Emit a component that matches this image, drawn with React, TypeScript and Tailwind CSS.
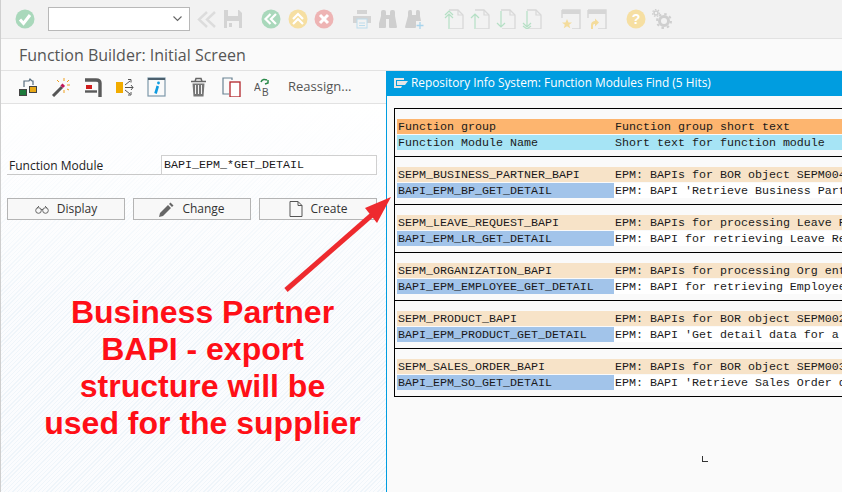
import { ReactNode } from 'react';

const groups = [
  { group: 'SEPM_BUSINESS_PARTNER_BAPI', groupText: 'EPM: BAPIs for BOR object SEPM004', name: 'BAPI_EPM_BP_GET_DETAIL', text: "EPM: BAPI 'Retrieve Business Part" },
  { group: 'SEPM_LEAVE_REQUEST_BAPI', groupText: 'EPM: BAPIs for processing Leave R', name: 'BAPI_EPM_LR_GET_DETAIL', text: 'EPM: BAPI for retrieving Leave Re' },
  { group: 'SEPM_ORGANIZATION_BAPI', groupText: 'EPM: BAPIs for processing Org ent', name: 'BAPI_EPM_EMPLOYEE_GET_DETAIL', text: 'EPM: BAPI for retrieving Employee' },
  { group: 'SEPM_PRODUCT_BAPI', groupText: 'EPM: BAPIs for BOR object SEPM002', name: 'BAPI_EPM_PRODUCT_GET_DETAIL', text: "EPM: BAPI 'Get detail data for a" },
  { group: 'SEPM_SALES_ORDER_BAPI', groupText: 'EPM: BAPIs for BOR object SEPM003', name: 'BAPI_EPM_SO_GET_DETAIL', text: "EPM: BAPI 'Retrieve Sales Order d" },
];

function Icon({ w = 20, h = 20, className = '', children }: { w?: number; h?: number; className?: string; children: ReactNode }) {
  return (
    <svg width={w} height={h} viewBox={`0 0 ${w} ${h}`} className={`shrink-0 ${className}`} fill="none">
      {children}
    </svg>
  );
}

function Page({ arrow }: { arrow: 'up2' | 'up' | 'down' | 'down2' }) {
  const color = '#b5e0c5';
  return (
    <Icon>
      <path d="M5 1h9l5 5v14H6" stroke="#d8d8d8" strokeWidth="1.3" />
      <path d="M14 1v5h5" stroke="#d8d8d8" strokeWidth="1.2" />
      {arrow.startsWith('up') ? (
        <path d="M5 20V5M1 9l4-4 4 4" stroke={color} strokeWidth="1.2" />
      ) : (
        <path d="M5 2v16M1 14l4 4 4-4" stroke={color} strokeWidth="1.2" />
      )}
      {arrow === 'up2' && <path d="M1 6l4-4 4 4" stroke={color} strokeWidth="1.2" />}
      {arrow === 'down2' && <path d="M1 17l4 3 4-3" stroke={color} strokeWidth="1.2" />}
    </Icon>
  );
}

function WindowFrame() {
  return (
    <>
      <path d="M1 1h18v19h-8M1 1v8" stroke="#d6d6d6" strokeWidth="1.4" />
      <rect x="1" y="1" width="18" height="4" fill="#d6d6d6" />
    </>
  );
}

function TopToolbar() {
  return (
    <div className="flex h-[39px] items-center border-b border-[#e2e2e2] bg-[#f2f2f2] pl-[14px]">
      <Icon>
        <circle cx="10" cy="10" r="9.5" fill="#a9d8bb" />
        <path d="M5 10.500l3.500 4L15 6" stroke="#fff" strokeWidth="3" />
      </Icon>
      <div className="ml-[13px] flex h-[24px] w-[142px] items-center justify-end border border-[#b8b8b8] bg-white pr-[7px]">
        <svg width="9" height="6" viewBox="0 0 9 6" fill="none"><path d="M.5.5l4 4 4-4" stroke="#666" strokeWidth="1.1" /></svg>
      </div>
      <Icon className="ml-[7px]">
        <path d="M10 3L2 10.500l8 7.500M18 3l-8 7.500 8 7.500" stroke="#dcdcdc" strokeWidth="2.400" />
      </Icon>
      <Icon className="ml-[6px]">
        <path d="M1 1h15l3 3v15H1z" fill="#d4d4d4" />
        <rect x="5" y="1" width="10" height="6" fill="#f2f2f2" />
        <rect x="4" y="12" width="12" height="7" fill="#f2f2f2" />
        <rect x="6" y="14" width="3" height="4" fill="#d4d4d4" />
      </Icon>
      <Icon className="ml-[18px]">
        <circle cx="10" cy="10" r="9.5" fill="#a9d8bb" />
        <path d="M9.500 5l-5 5 5 5M15 5l-5 5 5 5" stroke="#fff" strokeWidth="2.200" />
      </Icon>
      <Icon className="ml-[7px]">
        <circle cx="10" cy="10" r="9.5" fill="#f6dfa2" />
        <path d="M5 10l5-5 5 5M5 15l5-5 5 5" stroke="#fff" strokeWidth="2.200" />
      </Icon>
      <Icon className="ml-[6px]">
        <circle cx="10" cy="10" r="9.5" fill="#eeb4b4" />
        <path d="M6 6l8 8M14 6l-8 8" stroke="#fff" strokeWidth="3" />
      </Icon>
      <Icon className="ml-[18px]">
        <path d="M5 1h10v4H5zM1 7h18v7H1z" fill="#d4d4d4" />
        <rect x="5" y="10" width="10" height="9" fill="#f2f2f2" stroke="#bcdcec" />
        <path d="M7 14h6M7 16.500h6" stroke="#bcdcec" />
      </Icon>
      <Icon className="ml-[7px]" w={18}>
        <path d="M2 3q0-2 2-2h1q2 0 2 2v3h4V3q0-2 2-2h1q2 0 2 2v4l2 11q0 1-1 1h-6q-1 0-1-1V10H7v8q0 1-1 1H0q-1 0-1-1L2 7z" fill="#cfcfcf" />
      </Icon>
      <Icon className="ml-[8px]">
        <path d="M3 3q0-2 2-2h1q1 0 1 2v3h4V3q0-2 1-2h1q2 0 2 2v4l1 5h-5v6q0 1-1 1H1q-1 0-1-1L3 7z" fill="#cfcfcf" />
        <path d="M15 13v7M11.500 16.500h7" stroke="#a9d4ec" strokeWidth="1.300" />
      </Icon>
      <div className="ml-[19px] flex gap-[6px]">
        <Page arrow="up2" />
        <Page arrow="up" />
        <Page arrow="down" />
        <Page arrow="down2" />
      </div>
      <Icon className="ml-[19px]">
        <WindowFrame />
        <path d="M6 10l1.500 3.500H11l-2.800 2.200 1 3.500L6 17.200 2.800 19.200l1-3.500L1 13.500h3.500z" fill="#f4dc9c" />
      </Icon>
      <Icon className="ml-[6px]">
        <WindowFrame />
        <path d="M4 20v-4c0-3 2-4 4-4V9.500l4 4-4 4V15c-1.500 0-2 .500-2 2v3z" fill="#f4dc9c" />
      </Icon>
      <Icon className="ml-[19px]">
        <circle cx="10" cy="10" r="9.5" fill="#f6dfa2" />
        <text x="10" y="15" textAnchor="middle" fill="#fff" className="font-['Liberation_Sans'] text-[14px] font-bold">?</text>
      </Icon>
      <Icon className="ml-[6px]">
        <circle cx="12" cy="12" r="4.500" stroke="#cfcfcf" strokeWidth="3" />
        <circle cx="12" cy="12" r="7" stroke="#cfcfcf" strokeWidth="2" strokeDasharray="2.500 3" />
        <circle cx="4" cy="4" r="2" stroke="#cfcfcf" strokeWidth="1.500" />
        <circle cx="4" cy="4" r="3.500" stroke="#cfcfcf" strokeWidth="1.200" strokeDasharray="1.500 1.500" />
      </Icon>
    </div>
  );
}

function AppToolbar() {
  return (
    <div className="flex h-[33px] items-center border-b border-[#e2e2e2] pl-[17px]">
      <Icon>
        <path d="M6 10V4h5l1-2 2 2h1v4" stroke="#5a6f80" strokeWidth="1.200" />
        <rect x="1.500" y="12.500" width="7" height="6" fill="#1d7a3c" stroke="#444" />
        <rect x="11.500" y="9.500" width="7" height="6" fill="#e9a916" stroke="#444" />
      </Icon>
      <Icon className="ml-[13px]">
        <path d="M2 19L11 10" stroke="#555" strokeWidth="3" />
        <path d="M10.500 7.500l2.500 2.500" stroke="#c2185b" strokeWidth="3" />
        <path d="M13 1v3M13 13v3M19 8h-3M6 3l2 2M18 3l-2 2M18 13l-2-1" stroke="#f0a01e" strokeWidth="1" />
      </Icon>
      <Icon className="ml-[13px]">
        <path d="M1 3h11q4 0 4 3v14" stroke="#5a5a5a" strokeWidth="3.400" />
        <rect x="2" y="8" width="6" height="4" fill="#d01c1c" />
        <path d="M1 14.500h12" stroke="#5a5a5a" strokeWidth="2.400" />
      </Icon>
      <Icon className="ml-[12px]">
        <rect x="0" y="5" width="7" height="11" fill="#f2ac00" />
        <path d="M9 8l5-4M9 10.500h8M9 13l5 4M12 2.500h3v3M15 8l2 2.500-2 2.500M12 18h3v-3" stroke="#555" strokeWidth="1" />
      </Icon>
      <Icon className="ml-[11px]">
        <rect x="1" y="1" width="17" height="18" stroke="#7d98aa" strokeWidth="1.200" />
        <rect x="1" y="1" width="17" height="2" fill="#4b5f6d" />
        <circle cx="11.500" cy="6" r="1.400" fill="#0f9be0" />
        <path d="M10.800 9L8.500 16.500" stroke="#0f9be0" strokeWidth="2.600" />
      </Icon>
      <Icon className="ml-[23px]">
        <path d="M1 4.500h15M5 4.500l1-3h5l1 3" stroke="#666" strokeWidth="1.500" />
        <path d="M2.500 6.500h12l-1 13h-10z" fill="#777" />
        <path d="M5.500 8v9M8.500 8v9M11.500 8v9" stroke="#f4f4f4" />
      </Icon>
      <Icon className="ml-[12px]">
        <path d="M10 3V1H1v16h6" stroke="#6b8393" strokeWidth="1.200" />
        <rect x="8" y="5" width="10" height="15" fill="#fff" stroke="#b3262c" strokeWidth="1.300" />
      </Icon>
      <Icon className="ml-[12px]">
        <text x="0" y="14" fill="#555" className="font-['Liberation_Sans'] text-[10px]">A</text>
        <text x="8" y="19" fill="#555" className="font-['Liberation_Sans'] text-[10px]">B</text>
        <path d="M7 5c1-3 4-3 6-2M11 7l3-1 0-3" stroke="#2b8a4a" strokeWidth="1.500" />
      </Icon>
      <span className="ml-[14px] font-['Open_Sans'] text-[13px] text-[#555]">Reassign...</span>
    </div>
  );
}

function SapButton({ icon, label }: { icon: ReactNode; label: string }) {
  return (
    <button className="flex h-[22px] w-[118px] items-center justify-center gap-[8px] border border-[#b4b4b4] bg-[#f8f8f8] font-['Open_Sans'] text-[12px] text-[#333]">
      {icon}
      {label}
    </button>
  );
}

function LeftForm() {
  return (
    <div className="relative flex-1 bg-[linear-gradient(to_bottom,#ffffff_0%,rgba(255,255,255,0)_55%),repeating-linear-gradient(135deg,#eff5fa_0px,#eff5fa_1px,#fbfcfe_1px,#fbfcfe_3px)]">
      <div className="pl-[6px] pr-[9px] pt-[51px]">
        <div className="flex h-[20px] items-center border-b border-[#c8c8c8]">
          <span className="w-[154px] pl-[2px] pt-[2px] font-['Open_Sans'] text-[12px] text-[#222]">Function Module</span>
          <div className="flex h-[20px] flex-1 items-center border border-[#d0d0d0] bg-white pl-[2px] pt-[3px] font-['Liberation_Mono'] text-[11.67px] text-[#1a1a1a]">
            BAPI_EPM_*GET_DETAIL
          </div>
        </div>
        <div className="mt-[23px] flex gap-[8px]">
          <SapButton
            label="Display"
            icon={
              <svg width="14" height="9" viewBox="0 0 14 9" fill="none" stroke="#666">
                <circle cx="3.500" cy="5.500" r="2.800" />
                <circle cx="10.500" cy="5.500" r="2.800" />
                <path d="M6 4.500h2M2 3l2-2M12 3l-2-2" />
              </svg>
            }
          />
          <SapButton
            label="Change"
            icon={
              <svg width="15" height="15" viewBox="0 0 15 15" fill="#666">
                <path d="M0 15l1-4 8-8 3 3-8 8zM10 2l1.500-1.500 3 3L13 5z" />
              </svg>
            }
          />
          <SapButton
            label="Create"
            icon={
              <svg width="14" height="16" viewBox="0 0 14 16" fill="none" stroke="#555">
                <path d="M1 .5h8l4 4v11H1zM9 .5v4h4" />
              </svg>
            }
          />
        </div>
      </div>
      <p className="mt-[74px] pl-[18px] text-center font-['Liberation_Sans'] text-[32px] font-bold leading-[37px] text-[#ff0f17]">
        Business Partner
        <br />
        BAPI - export
        <br />
        structure will be
        <br />
        used for the supplier
      </p>
    </div>
  );
}

function ResultTable() {
  return (
    <div className="ml-[7px] mt-[12px] w-[600px] border border-black font-['Liberation_Mono'] text-[11.67px] leading-[17px] text-[#1a1a1a]">
      <div className="border-b border-black px-[2px] pb-[6px] pt-[10px]">
        <div className="flex h-[15px] bg-[#fdb56f]">
          <span className="w-[217px] pl-[1px]">Function group</span>
          <span className="pl-[1px]">Function group short text</span>
        </div>
        <div className="mt-[1px] flex h-[15px] bg-[#a6e4f5]">
          <span className="w-[217px] pl-[1px]">Function Module Name</span>
          <span className="pl-[1px]">Short text for function module</span>
        </div>
      </div>
      {groups.map((g, i) => (
        <div key={g.name} className={`px-[2px] pb-[6px] pt-[10px] ${i < groups.length - 1 ? 'border-b border-black' : ''}`}>
          <div className="flex h-[15px] bg-[#f7e3c8]">
            <span className="w-[217px] pl-[1px]">{g.group}</span>
            <span className="whitespace-nowrap pl-[1px]">{g.groupText}</span>
          </div>
          <div className="mt-[1px] flex h-[15px] bg-white">
            <span className="h-[15px] w-[217px] bg-[#a2c4ea] pl-[1px]">{g.name}</span>
            <span className="whitespace-nowrap pl-[1px]">{g.text}</span>
          </div>
        </div>
      ))}
    </div>
  );
}

export default function App() {
  return (
    <div className="relative flex h-[492px] w-[842px] flex-col overflow-hidden border-l border-[#cfcfcf] bg-[#fafafa] font-['Liberation_Sans',sans-serif]">
      <TopToolbar />
      <div className="flex h-[31px] items-center pl-[18px] font-['Open_Sans'] text-[16px] text-[#555]">Function Builder: Initial Screen</div>
      <div className="flex flex-1 border-t border-[#e2e2e2]">
        <div className="flex w-[385px] flex-col">
          <AppToolbar />
          <LeftForm />
        </div>
        <div className="flex-1 overflow-hidden border-l border-[#009de0] bg-[#fafafa]">
          <div className="flex h-[25px] items-center gap-[2px] bg-[#009de0] pb-[2px] pl-[6px] font-['Open_Sans'] text-[11.85px] text-white">
            <svg width="16" height="12" viewBox="0 0 16 12" fill="none">
              <path d="M1 1h10v2H3v6h6l-1 2H1z" fill="#e6e6e6" />
              <path d="M4 4h11l-3 4H4z" fill="#e6e6e6" />
            </svg>
            Repository Info System: Function Modules Find (5 Hits)
          </div>
          <ResultTable />
        </div>
      </div>
      <div className="absolute left-[701px] top-[456px] h-[6px] w-[6px] border-b border-l border-[#333]" />
      <svg className="pointer-events-none absolute left-[280px] top-[190px]" width="115" height="105" viewBox="0 0 115 105" fill="none">
        <path d="M5 100L92 24" stroke="#ee2a2e" strokeWidth="5" />
        <path d="M110 7L96 33 84 18z" fill="#ee2a2e" />
      </svg>
    </div>
  );
}
